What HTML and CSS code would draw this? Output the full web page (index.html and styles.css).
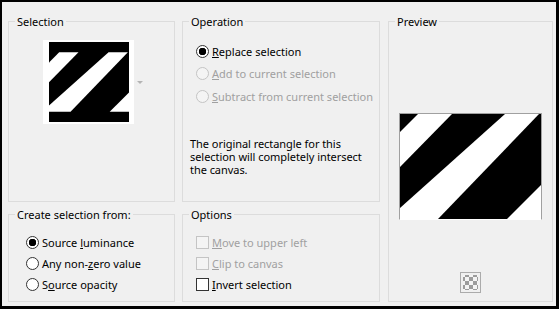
FILE: index.html
```html
<!DOCTYPE html>
<html lang="en">

<head>
    <meta charset="utf-8">
    <title>Load Selection</title>
    <link rel="stylesheet" href="styles.css">
</head>

<body>

    <div class="dialog">

        <fieldset class="group selection">
            <legend>Selection</legend>
            <div class="thumb-row">
                <div class="thumb">
                    <div class="thumb-img">
                        <svg viewBox="0 0 141 105" width="80" height="80">
                            <rect width="141" height="105" fill="#000" />
                            <polygon points="18,0 52,0 0,53 0,18" fill="#fff" />
                            <polygon points="105,0 139,0 38,105 0,105 0,94" fill="#fff" />
                            <polygon points="141,71 141,105 107,105" fill="#fff" />
                        </svg>
                    </div>
                </div>
                <span class="drop"></span>
            </div>
        </fieldset>

        <fieldset class="group operation">
            <legend>Operation</legend>
            <div class="choices">
                <label class="choice"><input class="radio" type="radio" name="op" checked><span><u>R</u>eplace selection</span></label>
                <label class="choice off"><input class="radio" type="radio" name="op" disabled><span><u>A</u>dd to current selection</span></label>
                <label class="choice off"><input class="radio" type="radio" name="op" disabled><span><u>S</u>ubtract from current selection</span></label>
            </div>
            <p class="note">The original rectangle for this<br>selection will completely intersect<br>the canvas.</p>
        </fieldset>

        <fieldset class="group preview">
            <legend>Preview</legend>
            <div class="preview-body">
                <div class="preview-img">
                    <svg viewBox="0 0 141 105" width="141" height="105">
                        <rect width="141" height="105" fill="#000" />
                        <polygon points="18,0 52,0 0,53 0,18" fill="#fff" />
                        <polygon points="105,0 139,0 38,105 0,105 0,94" fill="#fff" />
                        <polygon points="141,71 141,105 107,105" fill="#fff" />
                    </svg>
                </div>
                <span class="checker"></span>
            </div>
        </fieldset>

        <fieldset class="group source">
            <legend>Create selection from:</legend>
            <div class="choices">
                <label class="choice"><input class="radio" type="radio" name="src" checked><span>Source <u>l</u>uminance</span></label>
                <label class="choice"><input class="radio" type="radio" name="src"><span>Any non-<u>z</u>ero value</span></label>
                <label class="choice"><input class="radio" type="radio" name="src"><span>S<u>o</u>urce opacity</span></label>
            </div>
        </fieldset>

        <fieldset class="group options">
            <legend>Options</legend>
            <div class="choices">
                <label class="choice off"><input class="check" type="checkbox" disabled><span><u>M</u>ove to upper left</span></label>
                <label class="choice off"><input class="check" type="checkbox" disabled><span><u>C</u>lip to canvas</span></label>
                <label class="choice"><input class="check" type="checkbox"><span><u>I</u>nvert selection</span></label>
            </div>
        </fieldset>

    </div>

</body>

</html>
```

FILE: styles.css
```css
* {
    box-sizing: border-box;
}

body {
    margin: 0;
    font-family: "Noto Sans", sans-serif;
    font-size: 11px;
    color: #000;
}

.dialog {
    width: 559px;
    height: 309px;
    border: solid #000;
    border-width: 2px 3px 3px 2px;
    background-color: #f0f0f0;
    display: grid;
    grid-template-columns: 167px 198px 166px;
    grid-template-rows: 188px 95px;
    gap: 5px 7px;
    padding: 12px 2px 0 6px;
}

/* group boxes */

.group {
    margin: 0;
    padding: 0;
    min-width: 0;
    border: 1px solid #dcdcdc;
}

.group legend {
    margin-left: 6px;
    padding: 0 2px;
    line-height: 15px;
}

.selection {
    grid-column: 1;
    grid-row: 1;
}

.operation {
    grid-column: 2;
    grid-row: 1;
}

.preview {
    grid-column: 3;
    grid-row: 1 / 3;
    margin-left: 1px;
}

.source {
    grid-column: 1;
    grid-row: 2;
}

.options {
    grid-column: 2;
    grid-row: 2;
}

/* selection thumbnail */

.thumb-row {
    display: flex;
    align-items: center;
    margin-top: 11px;
    padding-left: 34px;
}

.thumb {
    background-color: #fff;
    padding: 2px 5px 2px 6px;
}

.thumb-img {
    width: 80px;
    height: 80px;
    background-color: #000;
}

.thumb-img svg {
    display: block;
}

.drop {
    width: 0;
    height: 0;
    margin-left: 3px;
    border-left: 3px solid transparent;
    border-right: 3px solid transparent;
    border-top: 3px solid #b4b4b4;
}

/* radio + check rows */

.choices {
    display: flex;
    flex-direction: column;
}

.operation .choices {
    margin-top: 11px;
    padding-left: 13px;
}

.operation .choice {
    height: 22.5px;
}

.source .choices {
    margin-top: 10px;
    padding-left: 17px;
}

.options .choices {
    margin-top: 10px;
    padding-left: 13px;
}

.choice {
    display: flex;
    align-items: center;
    gap: 3px;
    height: 21px;
}

.choice u {
    text-decoration-thickness: 1px;
}

.off {
    color: #a0a0a0;
}

.radio,
.check {
    appearance: none;
    margin: 0;
    width: 13px;
    height: 13px;
    border: 1px solid #333;
    background-color: #fff;
}

.radio {
    border-radius: 50%;
}

.radio:checked {
    background: radial-gradient(circle, #000 0 3.5px, #fff 4px);
}

.radio:disabled,
.check:disabled {
    border-color: #c4c4c4;
    background-color: #f4f4f4;
}

.note {
    margin: 29px 0 0 7px;
    line-height: 13px;
    letter-spacing: -0.05px;
}

/* preview pane */

.preview-body {
    display: flex;
    flex-direction: column;
    align-items: center;
}

.preview-img {
    margin-top: 84px;
    border: 1px solid #a0a0a0;
    border-bottom-color: #fff;
}

.preview-img svg {
    display: block;
}

.checker {
    width: 21px;
    height: 21px;
    margin-top: 52px;
    border: 1px solid #ababab;
    padding: 2px;
    background: conic-gradient(#9c9c9c 25%, #f4f4f4 0 50%, #9c9c9c 0 75%, #f4f4f4 0) 2px 2px / 8px 8px content-box, #e4e4e4;
    background-clip: content-box;
}
```
